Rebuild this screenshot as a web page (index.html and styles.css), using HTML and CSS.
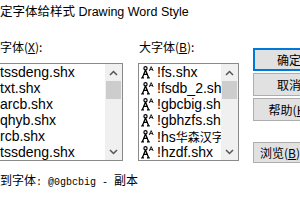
FILE: index.html
```html
<!DOCTYPE html>
<html lang="zh">
<head>
<meta charset="utf-8">
<link rel="stylesheet" href="styles.css">
</head>
<body>
<div class="title">定字体给样式 Drawing Word Style</div>
<div class="main">
  <div class="col col-left">
    <div class="label">字体(<u>X</u>):</div>
    <div class="list list-left">
      <ul class="items">
        <li><span class="name">tssdeng.shx</span></li>
        <li><span class="name">txt.shx</span></li>
        <li><span class="name">arcb.shx</span></li>
        <li><span class="name">qhyb.shx</span></li>
        <li><span class="name">rcb.shx</span></li>
        <li><span class="name">tssdeng.shx</span></li>
      </ul>
      <div class="scroll">
        <div class="arrow"><svg width="9" height="6" viewBox="0 0 9 6"><polyline points="1,5 4.5,1.5 8,5" fill="none" stroke="#555" stroke-width="1.5"/></svg></div>
        <div class="thumb"></div>
        <div class="track"></div>
        <div class="arrow"><svg width="9" height="6" viewBox="0 0 9 6"><polyline points="1,1 4.5,4.5 8,1" fill="none" stroke="#555" stroke-width="1.5"/></svg></div>
      </div>
    </div>
  </div>
  <div class="col col-right">
    <div class="label">大字体(<u>B</u>):</div>
    <div class="list list-right">
      <ul class="items">
        <li><svg class="ico" width="13" height="13" viewBox="0 0 13 13"><circle cx="4.5" cy="2.3" r="1.6" fill="none" stroke="#000" stroke-width="1.2"/><path d="M4.5 4 L1.5 11.5 M4.5 4 L7.5 11.5 M2 8.3 H7 M0.2 11.8 H3 M6 11.8 H8.8" fill="none" stroke="#000" stroke-width="1.3"/><path d="M8.2 5 L10.2 0.6 L12.2 5 M9 3.6 H11.4" fill="none" stroke="#000" stroke-width="0.9"/></svg><span class="name">!fs.shx</span></li>
        <li><svg class="ico" width="13" height="13" viewBox="0 0 13 13"><circle cx="4.5" cy="2.3" r="1.6" fill="none" stroke="#000" stroke-width="1.2"/><path d="M4.5 4 L1.5 11.5 M4.5 4 L7.5 11.5 M2 8.3 H7 M0.2 11.8 H3 M6 11.8 H8.8" fill="none" stroke="#000" stroke-width="1.3"/><path d="M8.2 5 L10.2 0.6 L12.2 5 M9 3.6 H11.4" fill="none" stroke="#000" stroke-width="0.9"/></svg><span class="name">!fsdb_2.shx</span></li>
        <li><svg class="ico" width="13" height="13" viewBox="0 0 13 13"><circle cx="4.5" cy="2.3" r="1.6" fill="none" stroke="#000" stroke-width="1.2"/><path d="M4.5 4 L1.5 11.5 M4.5 4 L7.5 11.5 M2 8.3 H7 M0.2 11.8 H3 M6 11.8 H8.8" fill="none" stroke="#000" stroke-width="1.3"/><path d="M8.2 5 L10.2 0.6 L12.2 5 M9 3.6 H11.4" fill="none" stroke="#000" stroke-width="0.9"/></svg><span class="name">!gbcbig.shx</span></li>
        <li><svg class="ico" width="13" height="13" viewBox="0 0 13 13"><circle cx="4.5" cy="2.3" r="1.6" fill="none" stroke="#000" stroke-width="1.2"/><path d="M4.5 4 L1.5 11.5 M4.5 4 L7.5 11.5 M2 8.3 H7 M0.2 11.8 H3 M6 11.8 H8.8" fill="none" stroke="#000" stroke-width="1.3"/><path d="M8.2 5 L10.2 0.6 L12.2 5 M9 3.6 H11.4" fill="none" stroke="#000" stroke-width="0.9"/></svg><span class="name">!gbhzfs.shx</span></li>
        <li><svg class="ico" width="13" height="13" viewBox="0 0 13 13"><circle cx="4.5" cy="2.3" r="1.6" fill="none" stroke="#000" stroke-width="1.2"/><path d="M4.5 4 L1.5 11.5 M4.5 4 L7.5 11.5 M2 8.3 H7 M0.2 11.8 H3 M6 11.8 H8.8" fill="none" stroke="#000" stroke-width="1.3"/><path d="M8.2 5 L10.2 0.6 L12.2 5 M9 3.6 H11.4" fill="none" stroke="#000" stroke-width="0.9"/></svg><span class="name">!hs<span class="cjk">华森汉字</span></span></li>
        <li><svg class="ico" width="13" height="13" viewBox="0 0 13 13"><circle cx="4.5" cy="2.3" r="1.6" fill="none" stroke="#000" stroke-width="1.2"/><path d="M4.5 4 L1.5 11.5 M4.5 4 L7.5 11.5 M2 8.3 H7 M0.2 11.8 H3 M6 11.8 H8.8" fill="none" stroke="#000" stroke-width="1.3"/><path d="M8.2 5 L10.2 0.6 L12.2 5 M9 3.6 H11.4" fill="none" stroke="#000" stroke-width="0.9"/></svg><span class="name">!hzdf.shx</span></li>
      </ul>
      <div class="scroll">
        <div class="arrow"><svg width="9" height="6" viewBox="0 0 9 6"><polyline points="1,5 4.5,1.5 8,5" fill="none" stroke="#555" stroke-width="1.5"/></svg></div>
        <div class="thumb"></div>
        <div class="track"></div>
        <div class="arrow"><svg width="9" height="6" viewBox="0 0 9 6"><polyline points="1,1 4.5,4.5 8,1" fill="none" stroke="#555" stroke-width="1.5"/></svg></div>
      </div>
    </div>
  </div>
  <div class="buttons">
    <div class="btn btn-default">确定</div>
    <div class="btn">取消</div>
    <div class="btn">帮助(<u>H</u>)</div>
    <div class="btn btn-browse">浏览(<u>B</u>)</div>
  </div>
</div>
<div class="footer">到字体<span class="mono">: @0gbcbig - </span>副本</div>
</body>
</html>
```

FILE: styles.css
```css
html, body {
  margin: 0;
  padding: 0;
}
body {
  width: 300px;
  height: 200px;
  overflow: hidden;
  background: #ffffff;
  color: #000;
  font-family: "Liberation Sans", "Noto Sans CJK SC", sans-serif;
}
.title {
  height: 24px;
  line-height: 24px;
  font-size: 12.5px;
  font-family: "Liberation Sans", "Noto Sans CJK SC", sans-serif;
  white-space: nowrap;
}
.main {
  display: flex;
  margin-top: 15px;
  align-items: flex-start;
}
.label {
  font-family: "Noto Sans CJK SC", sans-serif;
  font-size: 12px;
  line-height: 16px;
  height: 16px;
  margin-bottom: 8px;
  white-space: nowrap;
}
.label u, .btn u {
  text-underline-offset: 1px;
}
.col-left {
  margin-left: -19px;
}
.col-left .label {
  margin-left: 19px;
}
.col-right {
  margin-left: 15px;
}
.col-right .label {
  margin-left: 1px;
}
.list {
  display: flex;
  border: 1px solid #8a8a8a;
  background: #fff;
  height: 96px;
  overflow: hidden;
}
.list-left { width: 140px; }
.list-right { width: 99px; }
.items {
  list-style: none;
  margin: 0;
  padding: 0;
  flex: 1;
  min-width: 0;
  overflow: hidden;
}
.items li {
  display: flex;
  align-items: center;
  height: 16px;
  white-space: nowrap;
  font-size: 14px;
  padding-left: 18px;
}
.list-right .items li {
  padding-left: 2px;
}
.ico {
  flex: none;
  margin-right: 3px;
}
.name {
  flex: none;
}
.cjk {
  font-family: "Noto Sans CJK SC", sans-serif;
  font-size: 12px;
}
.scroll {
  flex: none;
  width: 17px;
  background: #f0f0f0;
  display: flex;
  flex-direction: column;
}
.arrow {
  height: 17px;
  display: flex;
  align-items: center;
  justify-content: center;
  flex: none;
}
.thumb {
  height: 18px;
  margin: 0 1px;
  background: #cdcdcd;
  flex: none;
}
.track {
  flex: 1;
}
.buttons {
  margin-left: 14px;
  margin-top: 9px;
  display: flex;
  flex-direction: column;
  gap: 2px;
}
.btn {
  box-sizing: border-box;
  width: 72px;
  height: 23px;
  border: 1px solid #adadad;
  background: #e1e1e1;
  font-family: "Noto Sans CJK SC", sans-serif;
  font-size: 12px;
  display: flex;
  align-items: center;
  justify-content: center;
  white-space: nowrap;
}
.btn-default {
  border: 2px solid #0078d7;
}
.btn-browse {
  width: 54px;
  height: 21px;
  margin-top: 19px;
}
.footer {
  margin-top: 9px;
  line-height: 16px;
  font-size: 12px;
  font-family: "Noto Sans CJK SC", sans-serif;
  white-space: nowrap;
}
.mono {
  font-family: "Liberation Mono", monospace;
  font-size: 10px;
}
```
